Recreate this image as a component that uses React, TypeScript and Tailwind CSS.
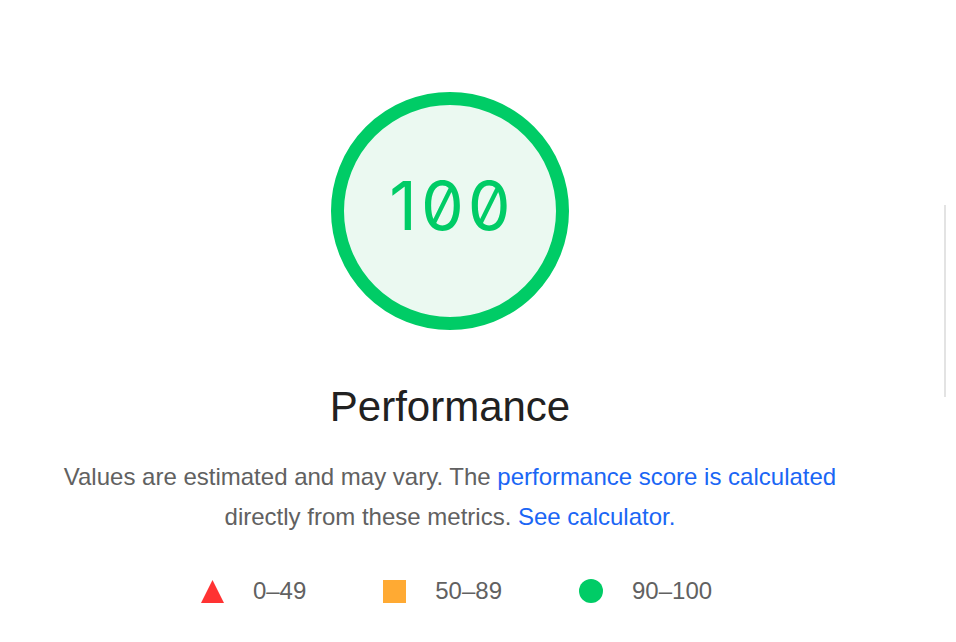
const legend = [
  { label: "0–49", shape: "triangle" },
  { label: "50–89", shape: "square" },
  { label: "90–100", shape: "circle" },
];

function LegendIcon({ shape }: { shape: string }) {
  if (shape === "triangle") {
    return (
      <svg width="23" height="23" viewBox="0 0 23 23">
        <polygon points="11.5,0 23,23 0,23" fill="#ff3333" />
      </svg>
    );
  }
  if (shape === "square") {
    return <div className="w-[23px] h-[23px] bg-[#ffaa33]" />;
  }
  return <div className="w-[24px] h-[24px] rounded-full bg-[#00cc66]" />;
}

export default function App() {
  return (
    <div className="flex min-h-screen bg-white font-['Liberation_Sans',Arial,sans-serif]">
      <div className="w-[900px] flex flex-col items-center pt-[92px] text-center">
        {/* score gauge */}
        <div className="w-[238px] h-[238px] rounded-full border-[13px] border-[#00cc66] bg-[#ebf9f1] flex items-center justify-center pb-[12px]">
          <div
            aria-label="100"
            className="flex gap-[4px] font-['Inter',monospace] slashed-zero text-[68px] leading-none font-normal text-[#00cc66]"
          >
            {"100".split("").map((d, i) => (
              <span key={i}>{d}</span>
            ))}
          </div>
        </div>

        <h1 className="mt-[52px] text-[42px] leading-[50px] text-[#212121]">Performance</h1>

        <p className="mt-[25px] text-[24px] leading-[40px] text-[#616161]">
          Values are estimated and may vary. The{" "}
          <a className="text-[#1a66f5]">performance score is calculated</a>
          <br />
          directly from these metrics.{" "}
          <a className="text-[#1a66f5]">See calculator.</a>
        </p>

        <div className="mt-[42px] flex items-center gap-[77px] pl-[13px]">
          {legend.map((item) => (
            <div key={item.label} className="flex items-center gap-[29px]">
              <LegendIcon shape={item.shape} />
              <span className="text-[24px] leading-[24px] text-[#616161]">{item.label}</span>
            </div>
          ))}
        </div>
      </div>

      <div className="w-[44px]" />
      {/* right divider */}
      <div className="w-[2px] h-[192px] mt-[205px] bg-[#e3e3e3]" />
    </div>
  );
}
